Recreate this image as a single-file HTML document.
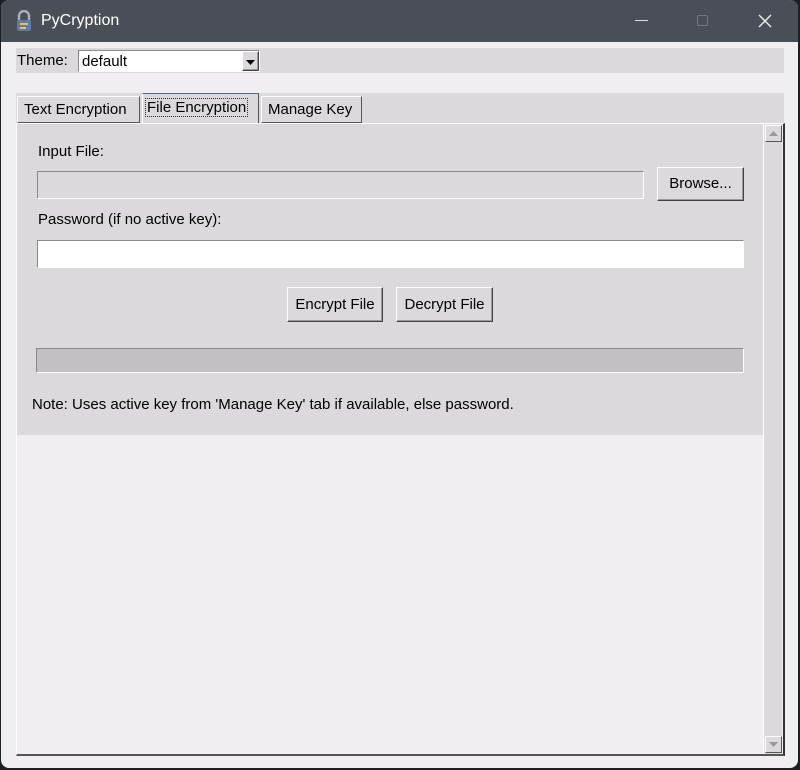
<!DOCTYPE html>
<html><head><style>
*{margin:0;padding:0;box-sizing:border-box}
body{width:800px;height:770px;background:#1c1f24;position:relative;overflow:hidden;font-family:"Liberation Sans",sans-serif;font-size:15px;color:#000}
.a{position:absolute}
.win{left:1px;top:0;width:797px;height:768px;background:#f0eef1;border-radius:8px;overflow:hidden}
.tb{left:0;top:0;width:797px;height:42px;background:#4a4f57;color:#fff;font-size:16px}
.bevel{border:1px solid;border-color:#fff #555 #555 #fff}
.sunk{border:1px solid;border-color:#8a888b #fff #fff #8a888b}
.btn{background:#dbd9dc;border:1px solid;border-color:#fff #444 #444 #fff;box-shadow:inset -1px -1px 0 #999;text-align:center;font-size:15px}
</style></head><body>
<div class="a win">
 <div class="a tb">
  <svg class="a" style="left:14px;top:10px" width="18" height="22" viewBox="0 0 18 22"><path d="M4 10V6a5 5 0 0 1 10 0v4" fill="none" stroke="#aab" stroke-width="2.5"/><rect x="2" y="10" width="14" height="11" rx="2" fill="#5a7db0"/><path d="M5 14h8M5 18h6" stroke="#f0c040" stroke-width="2"/></svg>
  <div class="a" style="left:40px;top:12px">PyCryption</div>
  <div class="a" style="left:634px;top:20px;width:13px;height:1px;background:#ddd"></div>
  <div class="a" style="left:696px;top:15px;width:11px;height:11px;border:1px solid #777;border-radius:2px"></div>
  <svg class="a" style="left:757px;top:14px" width="14" height="14"><path d="M1 1L13 13M13 1L1 13" stroke="#eee" stroke-width="1.4"/></svg>
 </div>
 <div class="a" style="left:15px;top:48px;width:768px;height:25px;background:#dbd9dc"></div>
 <div class="a" style="left:16px;top:52px">Theme:</div>
 <div class="a sunk" style="left:77px;top:50px;width:182px;height:22px;background:#fff;padding:2px 3px">default</div>
 <div class="a btn" style="left:241px;top:51px;width:17px;height:20px"><svg width="15" height="18"><path d="M3 8h9l-4.5 5z" fill="#000"/></svg></div>
 <div class="a" style="left:15px;top:93px;width:768px;height:30px;background:#dbd9dc"></div>
 <div class="a bevel" style="left:16px;top:96px;width:123px;height:27px;background:#dbd9dc;padding:4px 6px;white-space:nowrap">Text Encryption</div>
 <div class="a bevel" style="left:141px;top:93px;width:117px;height:31px;background:#dbd9dc;padding:5px 3px;border-top-color:#4a6a8a;white-space:nowrap"><span style="outline:1px dotted #333;padding:0 1px">File Encryption</span></div>
 <div class="a bevel" style="left:260px;top:96px;width:101px;height:27px;background:#dbd9dc;padding:4px 6px;white-space:nowrap">Manage Key</div>
 <div class="a" style="left:15px;top:123px;width:769px;height:633px;border-left:1px solid #fff;border-top:1px solid #fff;border-bottom:2px solid #555;border-right:2px solid #333"></div>
 <div class="a" style="left:16px;top:124px;width:747px;height:311px;background:#dbd9dc"></div>
 <div class="a" style="left:762px;top:124px;width:19px;height:630px;background:#dbd9dc;border-left:1px solid #fff"></div>
 <div class="a bevel" style="left:764px;top:125px;width:17px;height:17px"><svg width="15" height="15"><path d="M3 10h9L7.5 5z" fill="#999"/></svg></div>
 <div class="a bevel" style="left:764px;top:736px;width:17px;height:17px"><svg width="15" height="15"><path d="M3 5h9L7.5 10z" fill="#999"/></svg></div>
 <div class="a" style="left:37px;top:143px">Input File:</div>
 <div class="a sunk" style="left:36px;top:171px;width:607px;height:28px;background:#dbd9dc"></div>
 <div class="a btn" style="left:656px;top:167px;width:87px;height:34px;line-height:32px">Browse...</div>
 <div class="a" style="left:37px;top:211px">Password (if no active key):</div>
 <div class="a sunk" style="left:36px;top:240px;width:707px;height:28px;background:#fff"></div>
 <div class="a btn" style="left:286px;top:287px;width:96px;height:35px;line-height:33px">Encrypt File</div>
 <div class="a btn" style="left:395px;top:287px;width:97px;height:35px;line-height:33px">Decrypt File</div>
 <div class="a sunk" style="left:35px;top:348px;width:708px;height:25px;background:#c2c0c3"></div>
 <div class="a" style="left:31px;top:396px">Note: Uses active key from 'Manage Key' tab if available, else password.</div>
</div>
</body></html>
